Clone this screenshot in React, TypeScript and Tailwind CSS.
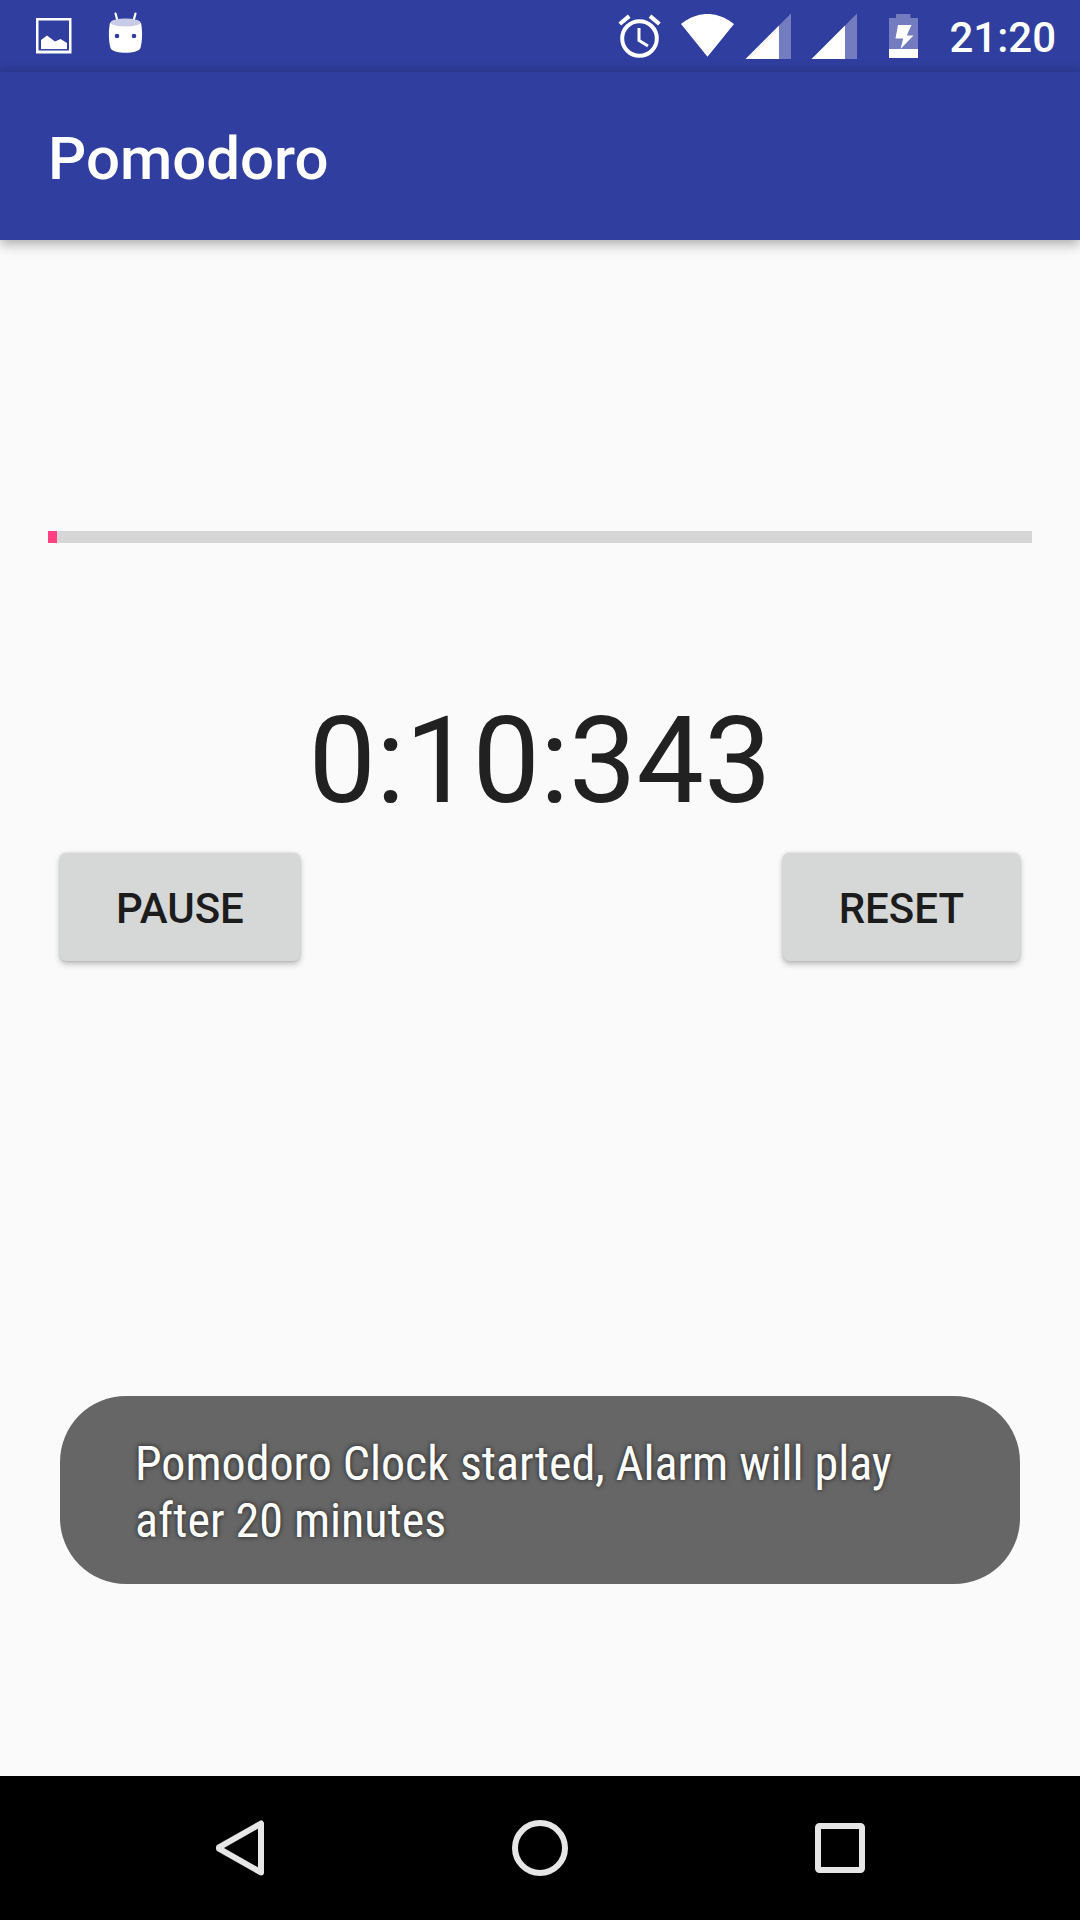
import React from "react";

function PictureIcon() {
  return (
    <svg viewBox="0 0 36 48" className="h-12 w-9" aria-hidden="true">
      <rect x="1.25" y="7.25" width="33" height="33" fill="none" stroke="#fff" strokeWidth="2.5" />
      <path d="M5 28L11 23.500L19 29.500L24.500 27L31 31V37H5Z" fill="#fff" />
      <path d="M2 38.400H34" stroke="#fff" strokeWidth="1" opacity="0.5" />
    </svg>
  );
}

function RobotHeadIcon() {
  return (
    <svg viewBox="0 0 36 48" className="h-12 w-9" aria-hidden="true">
      <path d="M8.500 1.500L10.700 9.500M28.500 1.500L26.300 9.500" stroke="#fff" strokeWidth="2.200" strokeLinecap="round" />
      <path d="M3 10.500C7 13.500 30 13.500 34 10.500C35.500 18 35.600 28 33.500 36C32 39.500 25 40.800 18.500 40.800C12 40.800 5 39.500 3.500 36C1.400 28 1.500 18 3 10.500Z" fill="#fff" />
      <ellipse cx="18.500" cy="10.500" rx="15" ry="4" fill="#c9cce6" />
      <circle cx="10" cy="24" r="2.300" fill="#303f9f" />
      <circle cx="27" cy="24" r="2.300" fill="#303f9f" />
    </svg>
  );
}

function AlarmIcon() {
  return (
    <svg viewBox="0 0 48 48" className="size-12" fill="none" stroke="#fff" aria-hidden="true">
      <circle cx="24.500" cy="26.500" r="17.300" strokeWidth="4" />
      <path d="M24 16V28.500L33 34" strokeWidth="3" />
      <path d="M4.800 12L14.200 4.200M35 4.200L44.400 12" strokeWidth="4.200" />
    </svg>
  );
}

function WifiIcon() {
  return (
    <svg viewBox="0 0 54 48" className="h-12 w-[54px]" aria-hidden="true">
      <path d="M26.500 44.800L0 12.100C1 11.300 11.500 2 26.500 2C41.500 2 52 11.300 53 12.100Z" fill="#fff" />
    </svg>
  );
}

function SignalIcon() {
  return (
    <svg viewBox="0 0 46 48" className="h-12 w-[46px]" aria-hidden="true">
      <path d="M34 13.500L46 1.500V47H34Z" fill="#fff" opacity="0.32" />
      <path d="M0.500 47L34 13.500V47Z" fill="#fff" />
    </svg>
  );
}

function BatteryIcon() {
  return (
    <svg viewBox="0 0 30 48" className="h-12 w-[30px]" aria-hidden="true">
      <path d="M7 2H21.500V6H29V37H0V6H7Z" fill="#fff" opacity="0.32" />
      <path d="M0 37H29V46H0Z" fill="#fff" />
      <path d="M9 13H22.500L17.800 23.500H24.500L11.500 37L14.200 26.500H6.500Z" fill="#fff" />
    </svg>
  );
}

function StatusBar() {
  return (
    <div className="flex h-[72px] items-center justify-between bg-[#303f9f] pr-6 pl-9">
      <div className="flex items-center gap-[35px]">
        <PictureIcon />
        <RobotHeadIcon />
      </div>
      <div className="flex items-center">
        <AlarmIcon />
        <div className="ml-[18px] flex gap-[10px]">
          <WifiIcon />
          <div className="flex gap-5">
            <SignalIcon />
            <SignalIcon />
          </div>
        </div>
        <div className="ml-8 flex items-center gap-[30px]">
          <BatteryIcon />
          <span className="pt-1 text-[42px] leading-[48px] font-medium text-white">21:20</span>
        </div>
      </div>
    </div>
  );
}

function RaisedButton({ children }: { children: React.ReactNode }) {
  return (
    <button
      type="button"
      className="h-[108px] rounded-[6px] bg-[#d6d7d7] px-14 pt-1 text-[42px] leading-[48px] font-medium text-[#1c1c1c] uppercase shadow-[0_3px_6px_rgba(0,0,0,0.26),0_0_3px_rgba(0,0,0,0.14)]"
    >
      {children}
    </button>
  );
}

function NavBar() {
  return (
    <nav className="flex h-36 items-center justify-center gap-60 bg-black" aria-label="System">
      <button type="button" aria-label="Back">
        <svg viewBox="0 0 60 60" className="size-[60px]" fill="none" stroke="#e6e6e6" strokeWidth="6" strokeLinejoin="round">
          <path d="M51 5.500V54.500L9 30.700V29.300Z" />
        </svg>
      </button>
      <button type="button" aria-label="Home">
        <svg viewBox="0 0 60 60" className="size-[60px]" fill="none" stroke="#e6e6e6" strokeWidth="6">
          <circle cx="30" cy="30" r="25" />
        </svg>
      </button>
      <button type="button" aria-label="Recent apps">
        <svg viewBox="0 0 60 60" className="size-[60px]" fill="none" stroke="#e6e6e6" strokeWidth="6">
          <rect x="8" y="8" width="44" height="44" rx="1.500" />
        </svg>
      </button>
    </nav>
  );
}

export default function App() {
  return (
    <div className="flex min-h-screen flex-col bg-[#fafafa] font-['Roboto',sans-serif]">
      <StatusBar />
      <header className="relative flex h-[168px] items-center bg-[#303f9f] px-12 pt-[6px] shadow-[0_6px_12px_rgba(0,0,0,0.18),0_0_12px_rgba(0,0,0,0.22)]">
        <h1 className="text-[60px] leading-[72px] font-medium text-white">Pomodoro</h1>
      </header>
      <main className="relative flex flex-1 flex-col px-12 pt-[291px]">
        <progress
          aria-label="Elapsed time"
          value={11}
          max={1200}
          className="block h-3 w-full appearance-none [&::-webkit-progress-bar]:bg-[#d6d6d6] [&::-webkit-progress-value]:bg-[#ff4081]"
        />
        <p className="mt-[148px] text-center text-[120px] leading-[140px] text-[#212121]">0:10:343</p>
        <div className="mt-[22px] flex justify-between px-3">
          <RaisedButton>Pause</RaisedButton>
          <RaisedButton>Reset</RaisedButton>
        </div>
        <div
          role="status"
          className="absolute inset-x-[60px] bottom-48 rounded-[66px] bg-[#666666] px-[75px] pt-[39px] pb-[35px] font-['Roboto_Condensed','Liberation_Sans_Narrow',sans-serif] text-[48px] leading-[57px] text-white [text-shadow:0_0_5px_rgba(0,0,0,0.73)]"
        >
          Pomodoro Clock started, Alarm will play after 20 minutes
        </div>
      </main>
      <NavBar />
    </div>
  );
}
